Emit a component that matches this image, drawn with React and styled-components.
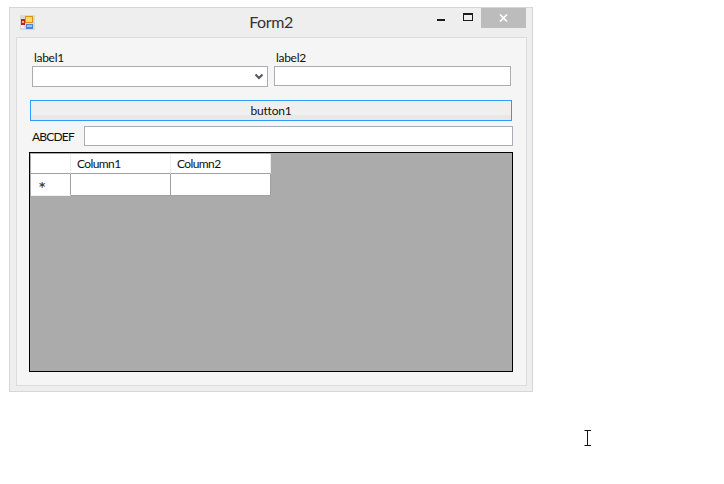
import React from "react";
import styled, { createGlobalStyle } from "styled-components";

const GlobalStyle = createGlobalStyle`
	html, body {
		margin: 0;
		background: #ffffff;
		font-family: "Lato", "Open Sans", sans-serif;
		font-size: 12px;
		color: #111;
	}
`

const Page = styled.div`
	position: relative;
	width: 724px;
	height: 484px;
	padding: 7px 0 0 9px;
	box-sizing: border-box;
	overflow: hidden;
`

const Window = styled.div`
	width: 524px;
	height: 385px;
	box-sizing: border-box;
	border: 1px solid #d6d6d6;
	background: #eeeeee;
	display: flex;
	flex-direction: column;
	padding: 0 5px 5px 6px;
`

const TitleBar = styled.div`
	height: 29px;
	flex: none;
	display: grid;
	grid-template-columns: 1fr auto 1fr;
	align-items: start;
	padding-right: 1px;
`

const AppIcon = styled.svg`
	width: 15px;
	height: 15px;
	margin: 7px 0 0 4px;
	display: block;
`

const Title = styled.div`
	font-size: 16px;
	line-height: 20px;
	margin-top: 4px;
	color: #333;
	letter-spacing: -0.4px;
`

const Controls = styled.div`
	display: flex;
	justify-content: flex-end;
	align-items: flex-start;
`

const CtrlButton = styled.div`
	width: ${(p) => p.$w}px;
	height: 20px;
	display: flex;
	align-items: center;
	justify-content: center;
	background: ${(p) => (p.$close ? "#bcbcbc" : "transparent")};
`

const Client = styled.div`
	flex: 1;
	box-sizing: border-box;
	border: 1px solid #dcdcdc;
	background: #f5f5f5;
	padding: 13px 13px 12px 13px;
	display: flex;
	flex-direction: column;
`

const TopRow = styled.div`
	display: grid;
	grid-template-columns: 236px 237px;
	gap: 6px;
	padding-left: 2px;
	height: 49px;
`

const Field = styled.div`
	display: flex;
	flex-direction: column;
`

const Label = styled.label`
	font-size: 12px;
	line-height: 14px;
	padding-left: 2px;
	height: 15px;
	letter-spacing: -0.3px;
`

const ComboBox = styled.div`
	height: 21px;
	box-sizing: border-box;
	border: 1px solid #ababb2;
	background: #fff;
	display: flex;
	align-items: center;
	justify-content: flex-end;
	padding-right: 3px;
`

const TextBox = styled.input`
	display: block;
	box-sizing: border-box;
	height: ${(p) => p.$h}px;
	width: ${(p) => p.$w}px;
	border: 1px solid #ababb2;
	background: #fff;
	padding: 0;
	margin: 0;
	outline: none;
`

const Button = styled.button`
	display: block;
	width: 482px;
	height: 21px;
	flex: none;
	box-sizing: border-box;
	border: 1px solid #3399ff;
	border-radius: 0;
	background: linear-gradient(#efefef 0 75%, #e8e8e8 75%);
	font-family: inherit;
	font-size: 12px;
	line-height: 17px;
	color: #111;
	padding: 0;
	letter-spacing: -0.2px;
`

const InputRow = styled.div`
	display: flex;
	align-items: center;
	height: 20px;
	margin-top: 5px;
	padding-left: 2px;
`

const RowLabel = styled.span`
	width: 52px;
	flex: none;
	letter-spacing: -0.8px;
`

const Grid = styled.div`
	width: 484px;
	height: 220px;
	flex: none;
	box-sizing: border-box;
	margin-top: 6px;
	margin-left: -1px;
	border: 1px solid #000;
	background: #ababab;
	padding: 1px;
`

const GridRow = styled.div`
	display: grid;
	grid-template-columns: 40px 100px 100px;
	grid-template-rows: ${(p) => p.$h}px;
	width: 240px;
`

const HeaderCell = styled.div`
	background: #fff;
	box-sizing: border-box;
	border-right: 1px solid #ececec;
	border-bottom: 1px solid #a0a0a0;
	padding-left: 6px;
	line-height: 19px;
	letter-spacing: -0.6px;
`

const RowHeader = styled.div`
	background: #fff;
	box-sizing: border-box;
	border-right: 1px solid #a0a0a0;
	border-bottom: 1px solid #f0f0f0;
	padding: 6px 0 0 8px;
	font-family: "DejaVu Sans", sans-serif;
	line-height: 14px;
	font-size: 12px;
	font-weight: 700;
	color: #444;
`

const DataCell = styled.div`
	background: #fff;
	box-sizing: border-box;
	border-right: 1px solid #a0a0a0;
	border-bottom: 1px solid #a0a0a0;
`

const TextCursor = styled.svg`
	position: absolute;
	left: 584px;
	top: 430px;
	width: 8px;
	height: 16px;
`

const App = () => {
	return (
		<Page>
			<GlobalStyle />
			<Window>
				<TitleBar>
					<AppIcon viewBox="0 0 15 15">
						<rect x="0" y="0" width="15" height="15" fill="#d9d9d9" />
						<rect x="1" y="10" width="3" height="3" fill="#f2f2f2" />
						<rect x="1" y="4" width="4" height="6" fill="#c81e1e" />
						<rect x="2" y="6" width="2" height="2" fill="#f4b0a0" />
						<rect x="5" y="1" width="8" height="7" fill="#d9950f" />
						<rect x="6" y="2" width="6" height="5" fill="#fbdc63" />
						<rect x="6" y="9" width="7" height="5" fill="#4c86d6" />
						<rect x="7" y="10" width="5" height="2" fill="#9cc4f2" />
					</AppIcon>
					<Title>Form2</Title>
					<Controls>
						<CtrlButton $w={28}>
							<svg width="8" height="8" viewBox="0 0 8 8">
								<rect x="0" y="5" width="8" height="2" fill="#1c1c1c" />
							</svg>
						</CtrlButton>
						<CtrlButton $w={26}>
							<svg width="10" height="8" viewBox="0 0 10 8" style={{ marginBottom: 3 }}>
								<rect x="0.5" y="0.5" width="9" height="7" fill="none" stroke="#1c1c1c" />
								<rect x="0" y="0" width="10" height="2" fill="#1c1c1c" />
							</svg>
						</CtrlButton>
						<CtrlButton $w={45} $close>
							<svg width="9" height="8" viewBox="0 0 9 8">
								<path d="M1 0.5 L8 7.5 M8 0.5 L1 7.5" stroke="#fff" strokeWidth="1.6" fill="none" />
							</svg>
						</CtrlButton>
					</Controls>
				</TitleBar>
				<Client>
					<TopRow>
						<Field>
							<Label>label1</Label>
							<ComboBox>
								<svg width="10" height="7" viewBox="0 0 10 7">
									<path d="M1.5 1.5 L5 5 L8.5 1.5" stroke="#555" strokeWidth="2" fill="none" />
								</svg>
							</ComboBox>
						</Field>
						<Field>
							<Label>label2</Label>
							<TextBox $w={237} $h={20} />
						</Field>
					</TopRow>
					<Button>button1</Button>
					<InputRow>
						<RowLabel>ABCDEF</RowLabel>
						<TextBox $w={429} $h={20} />
					</InputRow>
					<Grid>
						<GridRow $h={20}>
							<HeaderCell />
							<HeaderCell>Column1</HeaderCell>
							<HeaderCell>Column2</HeaderCell>
						</GridRow>
						<GridRow $h={22}>
							<RowHeader>*</RowHeader>
							<DataCell />
							<DataCell />
						</GridRow>
					</Grid>
				</Client>
			</Window>
			<TextCursor viewBox="0 0 8 16">
				<path d="M0.5 0.5 H7 M3.5 0.5 V15.5 M0.5 15.5 H7" stroke="#111" strokeWidth="1" fill="none" />
			</TextCursor>
		</Page>
	);
};

export default App;
